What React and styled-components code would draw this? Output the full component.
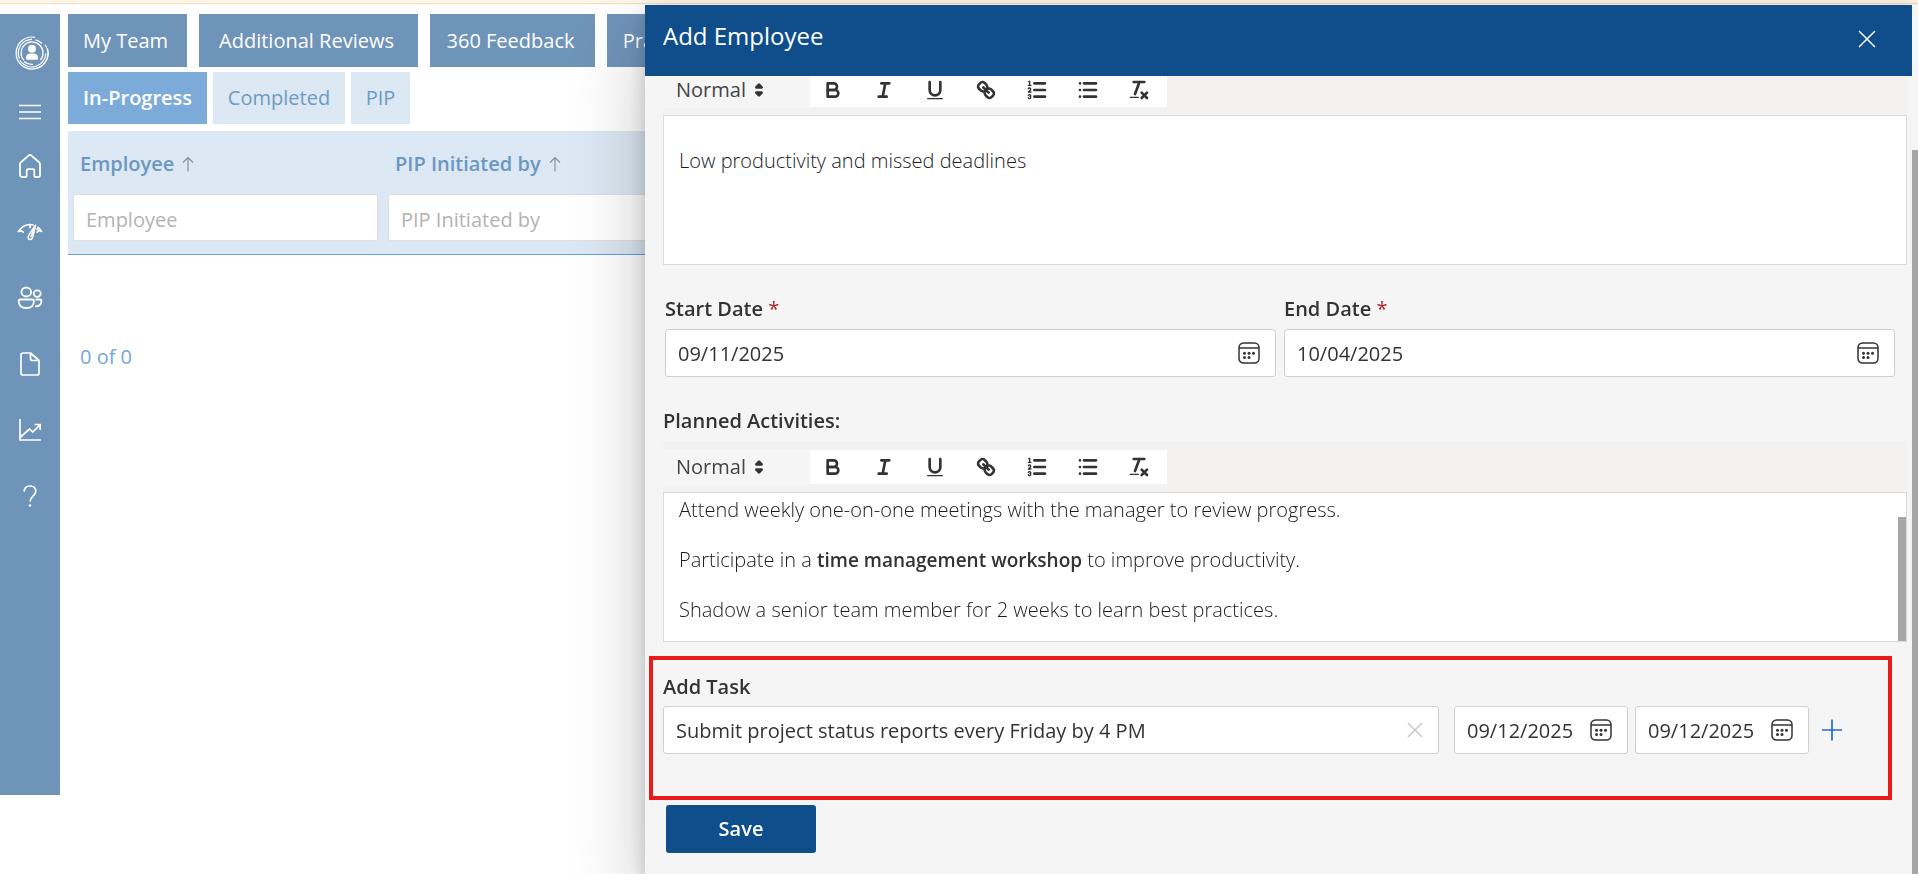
import React from "react";
import styled, { createGlobalStyle } from "styled-components";

const GlobalStyle = createGlobalStyle`
  *, *::before, *::after { box-sizing: border-box; }
  body {
    margin: 0;
    background: #fff;
    color: #333;
    font-family: "Open Sans", "Noto Sans", sans-serif;
    font-size: 20px;
    line-height: 30px;
    overflow: hidden;
  }
  button, input, select { font: inherit; color: inherit; }
`;

const Strip = styled.div`
  height: 5px;
  background: #fff6e8;
  border-bottom: 1px solid #fff9f0;
  box-shadow: inset 0 -1px 0 #eadfcd;
`;

const Shell = styled.div`
  display: flex;
  align-items: flex-start;
  gap: 8px;
  padding-top: 9px;
`;

const Sidebar = styled.nav`
  display: flex;
  flex-direction: column;
  flex: 0 0 60px;
  min-height: 781px;
  background: #6f94b9;
  color: #fff;
`;

const Brand = styled.div`
  display: flex;
  align-items: center;
  justify-content: center;
  height: 76px;
  padding: 2px 0 0 3px;
`;

const NavButton = styled.button`
  display: flex;
  align-items: center;
  justify-content: center;
  height: ${(p) => (p.$short ? "43px" : "66px")};
  padding: 0;
  border: 0;
  background: none;
  cursor: pointer;
`;

const Main = styled.main`
  flex: 1;
  min-width: 0;
`;

const TabBar = styled.div`
  display: flex;
  gap: ${(p) => (p.$primary ? "12px" : "6px")};
  margin-bottom: ${(p) => (p.$primary ? "5px" : "7px")};
`;

const Tab = styled.button`
  flex: 0 0 auto;
  width: ${(p) => p.$width}px;
  height: 53px;
  padding: 1px 4px 0 0;
  border: 0;
  background: #6f94b9;
  color: #fff;
  cursor: pointer;
`;

const SubTab = styled(Tab)`
  height: 52px;
  padding: 0;
  background: ${(p) => (p.$active ? "#7cabd9" : "#dce8f3")};
  color: ${(p) => (p.$active ? "#fff" : "#6f9bc2")};
  font-weight: ${(p) => (p.$active ? 600 : 400)};
`;

const Grid = styled.table`
  width: 100%;
  table-layout: fixed;
  border-collapse: collapse;
  background: #dce8f3;
  border-bottom: 1px solid #6a9fd2;
`;

const HeadCell = styled.th`
  width: ${(p) => p.$width || "auto"};
  height: 63px;
  padding: 2px 12px 0;
  text-align: left;
  font-weight: 600;
  color: #6b97c2;
`;

const HeadLabel = styled.span`
  display: inline-flex;
  align-items: center;
  gap: 8px;
`;

const FilterCell = styled.td`
  height: 60px;
  padding: 0 5px 13px;
`;

const FilterInput = styled.input`
  display: block;
  width: 100%;
  height: 47px;
  padding: 4px 12px 0;
  border: 1px solid #e1dfdd;
  border-radius: 2px;
  background: #fff;
  outline: 0;
  &::placeholder { color: #b3b3b3; opacity: 1; }
`;

const Count = styled.p`
  margin: 87px 0 0 12px;
  color: #74a7d8;
`;

const Panel = styled.aside`
  position: fixed;
  top: 5px;
  right: 0;
  bottom: 0;
  left: 645px;
  display: grid;
  grid-template-columns: minmax(0, 1fr) 6px;
  background: #f5f5f5;
  box-shadow: 0 32px 72px rgba(0, 0, 0, 0.22), 0 6px 18px rgba(0, 0, 0, 0.18);
`;

const PanelColumn = styled.div`
  display: flex;
  flex-direction: column;
  min-height: 0;
`;

const PanelHeader = styled.header`
  display: flex;
  justify-content: space-between;
  flex: 0 0 71px;
  padding: 14px 36px 18px 18px;
  background: #0f4e8a;
  color: #fff;
`;

const PanelTitle = styled.h1`
  margin: 0;
  font-size: 24px;
  font-weight: 400;
  line-height: 34px;
`;

const IconButton = styled.button`
  display: flex;
  align-items: center;
  justify-content: center;
  width: ${(p) => p.$size || 18}px;
  padding: 0;
  border: 0;
  background: none;
  color: ${(p) => p.$color || "inherit"};
  cursor: pointer;
`;

const PanelBody = styled.form`
  flex: 1;
  min-height: 0;
  overflow: hidden;
`;

const Scrolled = styled.div`
  margin-top: -12px;
`;

const Rail = styled.div`
  display: flex;
  flex-direction: column;
  padding-top: ${(p) => p.$offset}px;
`;

const Thumb = styled.div`
  flex: 1;
  width: ${(p) => p.$width}px;
  background: #a6a6a6;
`;

const EditorBlock = styled.section`
  margin: 0 5px 0 18px;
`;

const Toolbar = styled.div`
  display: flex;
  align-items: flex-start;
  height: 51px;
  padding-top: 8px;
  background: #f3f2f0;
`;

const StylePicker = styled.div`
  display: grid;
  width: 147px;
  height: 36px;
  background: #f5f5f5;
  > * { grid-area: 1 / 1; }
  > svg { justify-self: end; align-self: center; margin-right: 39px; pointer-events: none; }
`;

const StyleSelect = styled.select`
  width: 100%;
  padding: 0 13px;
  border: 0;
  background: none;
  appearance: none;
  outline: 0;
  color: #444;
`;

const Tools = styled.div`
  display: flex;
  height: 34px;
  margin-top: 1px;
  background: #fff;
`;

const Tool = styled.button`
  display: flex;
  align-items: center;
  justify-content: center;
  width: 45px;
  margin-right: 6px;
  padding: 0;
  border: 0;
  background: none;
  cursor: pointer;
`;

const EditorFrame = styled.div`
  display: flex;
  height: 150px;
  border: 1px solid #dadada;
  background: #fff;
`;

const EditorText = styled.div`
  flex: 1;
  padding: ${(p) => p.$top}px 15px 0;
  overflow: hidden;
  outline: 0;
  color: #1c1c1c;
  font-weight: 300;
  p { margin: 0 0 20px; }
  strong { color: #333; font-size: 19px; font-weight: 600; }
`;

const Label = styled.label`
  display: block;
  font-weight: 600;
`;

const Required = styled.span`
  color: #a4262c;
  font-weight: 400;
`;

const DateRow = styled.div`
  display: grid;
  grid-template-columns: 1fr 1fr;
  gap: 8px;
  margin: 29px 17px 29px 20px;
`;

const DateField = styled.div`
  display: flex;
  flex-direction: column;
  gap: 5px;
`;

const FieldBox = styled.div`
  display: flex;
  align-items: center;
  flex: ${(p) => (p.$fixed ? "none" : "1 1 auto")};
  width: ${(p) => (p.$fixed ? "174px" : "auto")};
  height: 48px;
  padding: 0 15px 0 0;
  border: 1px solid #d0d0d0;
  border-radius: 3px;
  background: #fff;
`;

const FieldInput = styled.input`
  flex: 1;
  width: 0;
  min-width: 0;
  height: 100%;
  padding: 0 0 0 12px;
  border: 0;
  background: none;
  outline: 0;
`;

const TaskSection = styled.section`
  margin: 14px 20px 5px 4px;
  padding: 12px 43px 42px 10px;
  border: 4px solid #e81b1b;
`;

const TaskRow = styled.div`
  display: flex;
  align-items: center;
  margin-top: 4px;
`;

const TaskDates = styled.div`
  display: flex;
  flex: none;
  gap: 7px;
  margin: 0 10px 0 15px;
`;

const SaveButton = styled.button`
  display: block;
  width: 150px;
  height: 48px;
  margin-left: 21px;
  padding: 0;
  border: 0;
  border-radius: 3px;
  background: #0f4e8a;
  color: #fff;
  font-weight: 600;
  cursor: pointer;
`;

const Line = styled.svg`
  display: block;
  flex: none;
  fill: none;
  stroke: currentColor;
  stroke-width: ${(p) => p.$weight || 1}px;
`;

const QuillSvg = styled.svg`
  display: block;
  fill: none;
  stroke: #333;
  stroke-width: 2px;
  stroke-linecap: round;
  stroke-linejoin: round;
  .thin { stroke-width: 1px; }
  .fill { fill: #333; stroke: none; }
`;

const Quill = ({ children }) => (
  <QuillSvg width="24" height="24" viewBox="0 0 18 18" aria-hidden="true">{children}</QuillSvg>
);

const Logo = () => (
  <Line width="34" height="34" viewBox="0 0 34 34" $weight={1.2}>
    <path d="M20 1.3A16 16 0 1 0 32.6 13" />
    <path d="M17 3.3A13.7 13.7 0 0 0 4.5 22.5" />
    <path d="M5 24.5A14 14 0 0 0 30.8 17.5M20.5 3.8A14 14 0 0 1 27 7.5M30 8.5A16 16 0 0 1 32.9 20A16 16 0 0 1 22 32.2" />
    <path d="M9 24.4A11 11 0 1 1 25.5 24M17 6A11 11 0 0 1 28 17M9 25.5A11.5 11.5 0 0 0 18 28.3" />
    <circle cx="17" cy="12.7" r="3.9" fill="currentColor" stroke="none" />
    <path d="M11 22.5c0-3.600 2-5 3.800-5h4.400c1.800 0 3.800 1.400 3.800 5 0 .9-.6 1.300-1.500 1.300h-9c-.9 0-1.500-.4-1.500-1.300z" fill="currentColor" stroke="none" />
  </Line>
);

const MenuIcon = () => (
  <Line width="22" height="16" viewBox="0 0 22 16" $weight={1.5}><path d="M0 1.500h22M0 8h22M0 14.500h22" /></Line>
);

const HomeIcon = () => (
  <Line width="22" height="24" viewBox="0 0 22 24" $weight={1.8} strokeLinejoin="round">
    <path d="M1 10.300c0-.8.300-1.500.9-2L9.500 1.600c.9-.8 2.100-.8 3 0l7.600 6.700c.6.500.9 1.200.9 2V21c0 1.200-.8 2-2 2h-2.500c-.7 0-1.200-.5-1.200-1.200V16.500c0-.8-.5-1.300-1.300-1.300H9c-.8 0-1.300.5-1.300 1.300v5.300c0 .7-.5 1.200-1.200 1.200H3c-1.200 0-2-.8-2-2z" />
  </Line>
);

const GaugeIcon = () => (
  <Line width="26" height="18" viewBox="0 0 26 18" $weight={1.6} strokeLinecap="round" strokeLinejoin="round">
    <path d="M1.500 8.500C4 4.500 8 1.500 13 1.500c1.200 0 2 .1 3 .4" />
    <path d="M1.500 8.500l3-.6 1.700 1.300M13 1.500v3.200M21 4.300c1.500 1.200 2.700 2.600 3.600 4.200l-2.600-.9-1.900 1.600M20 6.500l2-1.500" />
    <path d="M18.500 2.200l-6.800 10.200c-.9 1.700-.6 3.300.6 3.900 1.300.6 2.700-.2 3.300-1.900z" />
    <path d="M17 6.500l-3 7" />
  </Line>
);

const PeopleIcon = () => (
  <Line width="26" height="24" viewBox="0 0 26 24" $weight={1.8}>
    <ellipse cx="9.300" cy="6" rx="4.900" ry="4.500" />
    <ellipse cx="20.200" cy="7.600" rx="3.500" ry="3.200" />
    <path d="M3.200 13.500h12.200c.9 0 1.500.6 1.500 1.500 0 5-3.400 7-7.600 7S1.700 20 1.700 15c0-.9.6-1.500 1.500-1.500z" />
    <path d="M18.500 13.500h4.300c1 0 1.600.6 1.600 1.600 0 3.800-2.500 5.500-6.400 5.300" />
  </Line>
);

const FileIcon = () => (
  <Line width="20" height="24" viewBox="0 0 20 24" $weight={1.7} strokeLinejoin="round">
    <path d="M3 1h7.500L19 8.500V21c0 1.200-.8 2-2 2H3c-1.200 0-2-.8-2-2V3c0-1.200.8-2 2-2z" />
    <path d="M10.500 1v5.500c0 1.200.8 2 2 2H19" />
  </Line>
);

const ChartIcon = () => (
  <Line width="22" height="22" viewBox="0 0 22 22" $weight={1.7}>
    <path d="M1 0v21h21M1.500 18l9-8 3.200 3L21 5.800M15.500 5.500H21.200v5.500" />
  </Line>
);

const HelpIcon = () => (
  <Line width="14" height="22" viewBox="0 0 14 22" $weight={1.7}>
    <path d="M1.200 6.500C1.200 3 3.500 1 7 1s5.800 2.200 5.800 5.300C12.800 11 7 11.300 7 16.500" />
    <circle cx="7" cy="20.500" r="1.300" fill="currentColor" stroke="none" />
  </Line>
);

const ArrowUp = () => (
  <Line width="12" height="16" viewBox="0 0 12 16" $weight={1.2} color="#8a8f94"><path d="M6 15.500V1.500M1 6.500l5-5 5 5" /></Line>
);

const CloseIcon = ({ size, weight }) => (
  <Line width={size} height={size} viewBox="0 0 18 18" $weight={weight}><path d="M1 1l16 16M17 1L1 17" /></Line>
);

const PlusIcon = () => (
  <Line width="20" height="22" viewBox="0 0 20 22" $weight={1.7}><path d="M0 11h20M10 .5v21" /></Line>
);

const CalendarIcon = () => (
  <Line width="22" height="22" viewBox="0 0 22 22" $weight={1.5}>
    <rect x="1" y="1" width="20" height="20" rx="4.500" />
    <path d="M1 6h20" />
    <g fill="currentColor" stroke="none">
      <circle cx="6.500" cy="11.200" r="1.500" /><circle cx="11" cy="11.200" r="1.500" /><circle cx="15.500" cy="11.200" r="1.500" />
      <circle cx="6.500" cy="15.600" r="1.500" /><circle cx="11" cy="15.600" r="1.500" />
    </g>
  </Line>
);

const TOOLS = [
  ["Bold", <>
    <path d="M5,4H9.5A2.5,2.5,0,0,1,12,6.5v0A2.5,2.5,0,0,1,9.5,9H5Z" />
    <path d="M5,9h5.5A2.5,2.5,0,0,1,13,11.5v0A2.5,2.5,0,0,1,10.5,14H5Z" />
  </>],
  ["Italic", <path d="M7 4h6M5 14h6M8 14L10 4" />],
  ["Underline", <>
    <path d="M5,3V9a4.012,4.012,0,0,0,4,4H9a4.012,4.012,0,0,0,4-4V3" />
    <rect className="fill" height="1" rx="0.5" width="12" x="3" y="15" />
  </>],
  ["Link", <>
    <path d="M7 7l4 4" />
    <path d="M8.9,4.577a3.476,3.476,0,0,1,.36,4.679A3.476,3.476,0,0,1,4.577,8.9C3.185,7.5,2.035,6.4,4.217,4.217S7.5,3.185,8.9,4.577Z" />
    <path d="M13.423,9.1a3.476,3.476,0,0,0-4.679-.36,3.476,3.476,0,0,0,.36,4.679c1.392,1.392,2.5,2.542,4.679.36S14.815,10.5,13.423,9.1Z" />
  </>],
  ["Numbered list", <>
    <path d="M7 4h8M7 9h8M7 14h8" />
    <path className="thin" d="M2.500 5.500h2" />
    <path className="fill" d="M3.5,6A0.5,0.5,0,0,1,3,5.5V3.085l-0.276.138A0.5,0.5,0,0,1,2.053,3c-0.124-.247-0.023-0.324.224-0.447l1-.5A0.5,0.5,0,0,1,4,2.5v3A0.5,0.5,0,0,1,3.5,6Z" />
    <path className="thin" d="M4.5,10.5h-2c0-.234,1.85-1.076,1.85-2.234A0.959,0.959,0,0,0,2.5,8.156" />
    <path className="thin" d="M2.5,14.846a0.959,0.959,0,0,0,1.85-.109A0.7,0.7,0,0,0,3.75,14a0.688,0.688,0,0,0,.6-0.736,0.959,0.959,0,0,0-1.85-.109" />
  </>],
  ["Bulleted list", <path d="M6 4h9M6 9h9M6 14h9M3 4h0M3 9h0M3 14h0" />],
  ["Clear formatting", <>
    <path d="M5 3h8M6 12L9.350 3M11 11l4 4M15 11l-4 4" />
    <rect className="fill" height="1" rx="0.5" width="7" x="2" y="14" />
  </>],
];

const RichEditor = ({ label, top, thumb, children }) => (
  <>
    <Toolbar role="toolbar" aria-label={`${label} formatting`}>
      <StylePicker>
        <StyleSelect aria-label={`${label} text style`} defaultValue="Normal">
          <option>Normal</option>
        </StyleSelect>
        <Quill><path d="M7 11l2 2 2-2zM7 7l2-2 2 2z" /></Quill>
      </StylePicker>
      <Tools>
        {TOOLS.map(([name, icon]) => (
          <Tool key={name} type="button" aria-label={name}><Quill>{icon}</Quill></Tool>
        ))}
      </Tools>
    </Toolbar>
    <EditorFrame>
      <EditorText $top={top} role="textbox" aria-multiline="true" aria-label={label} contentEditable suppressContentEditableWarning spellCheck={false}>
        {children}
      </EditorText>
      {thumb && <Rail $offset={24}><Thumb $width={8} /></Rail>}
    </EditorFrame>
  </>
);

const DateBox = ({ id, value, label, fixed }) => (
  <FieldBox $fixed={fixed}>
    <FieldInput id={id} aria-label={label} defaultValue={value} />
    <IconButton type="button" $size={22} aria-label="Open calendar"><CalendarIcon /></IconButton>
  </FieldBox>
);

const NAV = [["Home", HomeIcon], ["Performance", GaugeIcon], ["People", PeopleIcon], ["Documents", FileIcon], ["Reports", ChartIcon], ["Help", HelpIcon]];
const TABS = [["My Team", 119], ["Additional Reviews", 219], ["360 Feedback", 165], ["Pra", 67]];

export default function App() {
  return (
    <>
      <GlobalStyle />
      <Strip />
      <Shell>
        <Sidebar aria-label="Main">
          <Brand><Logo /></Brand>
          <NavButton $short aria-label="Menu"><MenuIcon /></NavButton>
          {NAV.map(([name, Icon]) => (
            <NavButton key={name} aria-label={name}><Icon /></NavButton>
          ))}
        </Sidebar>
        <Main>
          <TabBar $primary>
            {TABS.map(([name, width]) => <Tab key={name} $width={width}>{name}</Tab>)}
          </TabBar>
          <TabBar>
            <SubTab $active $width={139}>In-Progress</SubTab>
            <SubTab $width={132}>Completed</SubTab>
            <SubTab $width={59}>PIP</SubTab>
          </TabBar>
          <Grid>
            <thead>
              <tr>
                <HeadCell $width="315px"><HeadLabel>Employee <ArrowUp /></HeadLabel></HeadCell>
                <HeadCell><HeadLabel>PIP Initiated by <ArrowUp /></HeadLabel></HeadCell>
              </tr>
            </thead>
            <tbody>
              <tr>
                <FilterCell><FilterInput aria-label="Filter by employee" placeholder="Employee" /></FilterCell>
                <FilterCell><FilterInput aria-label="Filter by initiator" placeholder="PIP Initiated by" /></FilterCell>
              </tr>
            </tbody>
          </Grid>
          <Count>0 of 0</Count>
        </Main>
      </Shell>

      <Panel role="dialog" aria-labelledby="panel-title">
        <PanelColumn>
          <PanelHeader>
            <PanelTitle id="panel-title">Add Employee</PanelTitle>
            <IconButton aria-label="Close"><CloseIcon size={18} weight={1.5} /></IconButton>
          </PanelHeader>
          <PanelBody onSubmit={(e) => e.preventDefault()}>
            <Scrolled>
              <EditorBlock>
                <RichEditor label="Reason" top={30}>
                  <p>Low productivity and missed deadlines</p>
                </RichEditor>
              </EditorBlock>
              <DateRow>
                <DateField>
                  <Label htmlFor="start-date">Start Date <Required>*</Required></Label>
                  <DateBox id="start-date" value="09/11/2025" />
                </DateField>
                <DateField>
                  <Label htmlFor="end-date">End Date <Required>*</Required></Label>
                  <DateBox id="end-date" value="10/04/2025" />
                </DateField>
              </DateRow>
              <EditorBlock>
                <DateField>
                  <Label as="div">Planned Activities:</Label>
                  <div>
                    <RichEditor label="Planned Activities" top={2} thumb>
                      <p>Attend weekly one-on-one meetings with the manager to review progress.</p>
                      <p>Participate in a <strong>time management workshop</strong> to improve productivity.</p>
                      <p>Shadow a senior team member for 2 weeks to learn best practices.</p>
                    </RichEditor>
                  </div>
                </DateField>
              </EditorBlock>
              <TaskSection>
                <Label htmlFor="task">Add Task</Label>
                <TaskRow>
                  <FieldBox>
                    <FieldInput id="task" defaultValue="Submit project status reports every Friday by 4 PM" />
                    <IconButton type="button" $size={16} $color="#c8c8c8" aria-label="Clear task"><CloseIcon size={16} weight={1.6} /></IconButton>
                  </FieldBox>
                  <TaskDates>
                    <DateBox fixed label="Task start date" value="09/12/2025" />
                    <DateBox fixed label="Task end date" value="09/12/2025" />
                  </TaskDates>
                  <IconButton type="button" $size={26} $color="#1f6fc0" aria-label="Add task"><PlusIcon /></IconButton>
                </TaskRow>
              </TaskSection>
              <SaveButton type="submit">Save</SaveButton>
            </Scrolled>
          </PanelBody>
        </PanelColumn>
        <Rail $offset={145}><Thumb $width={6} /></Rail>
      </Panel>
    </>
  );
}
